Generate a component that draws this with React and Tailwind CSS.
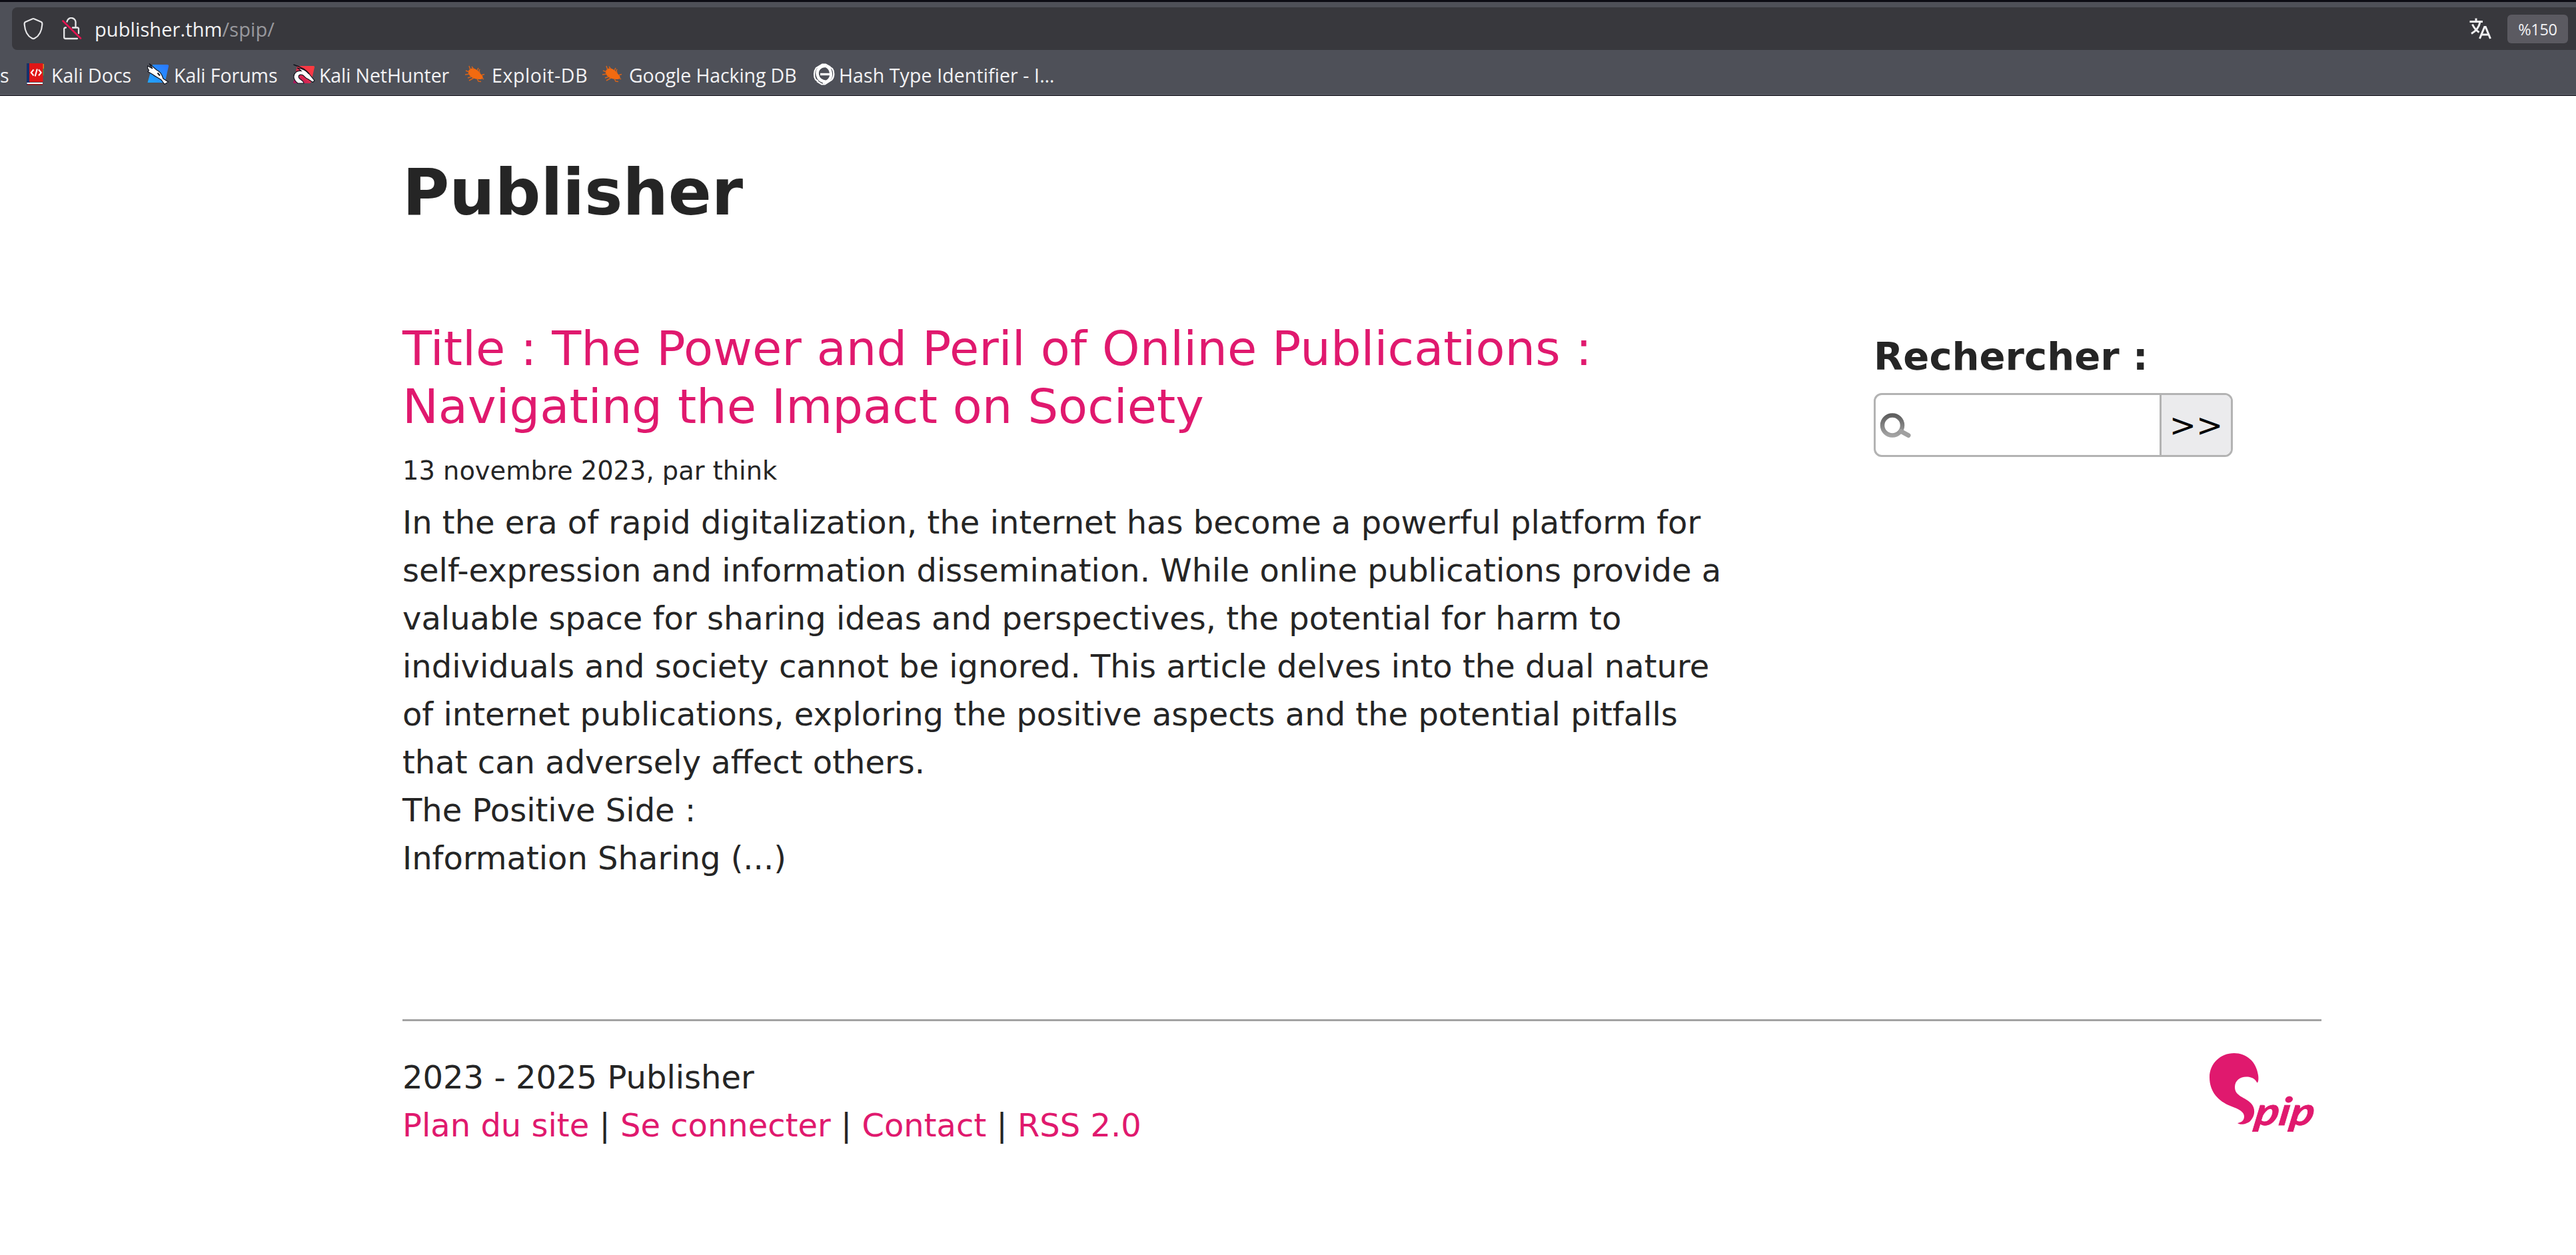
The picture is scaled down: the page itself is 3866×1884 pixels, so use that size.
const chromeFont = "font-['Open_Sans',sans-serif]";

function ShieldIcon() {
  return (
    <svg width="32" height="34" viewBox="0 0 32 34" fill="none" stroke="#e6e6e8" strokeWidth="2.2" strokeLinejoin="round">
      <path d="M16 2 Q16.500 2 17 2.300 L28 7 C29.300 7.600 29.500 9 29.300 11 C28.500 21 24 28.500 18 31.500 Q16 32.600 14 31.500 C8 28.500 3.500 21 2.700 11 C2.500 9 2.700 7.600 4 7 L15 2.300 Q15.500 2 16 2 Z" />
    </svg>
  );
}

function InsecureLockIcon() {
  return (
    <svg width="30" height="34" viewBox="0 0 30 34" fill="none" strokeLinecap="round">
      <path d="M7.500 6.500 A6.500 6.500 0 0 1 20.500 8.500 V15.500 H23.500 A1.500 1.500 0 0 1 25 17 V24 M20.500 15.500 H16 M6 15.500 H5 A1.800 1.800 0 0 0 3.200 17.300 V30 A2 2 0 0 0 5 32 H23" stroke="#e6e6e8" strokeWidth="2.300" />
      <path d="M1.500 5.500 L28 31.500" stroke="#e31451" strokeWidth="2.600" />
    </svg>
  );
}

function TranslateIcon() {
  return (
    <svg width="34" height="32" viewBox="0 0 34 32" fill="none" stroke="#f0f0f2" strokeWidth="3">
      <path d="M0.500 5.500 H20 M10 0.500 V5.500 M16 6 C14.500 14 9 20 3 23.500 M4.500 9.500 C7 15 10 18.500 14.500 21.500" />
      <path d="M15.500 31 L22.700 13.500 H24.300 L31.500 31 M18.500 25 H28.500" />
    </svg>
  );
}

function DocsIcon() {
  return (
    <svg width="26" height="33" viewBox="0 0 26 33">
      <path d="M0 0 H5 V29 L0 33 Z" fill="#17306b" />
      <path d="M24 1 H26 V18 L24 19 Z" fill="#3f8c4f" />
      <path d="M24 1 H26 V8 H24 Z" fill="#d58a26" />
      <path d="M4 0 H24.500 V28 H4 Z" fill="#e01616" />
      <path d="M0.500 30 H24" stroke="#fff" strokeWidth="2" />
      <path d="M1 32 H24" stroke="#a31313" strokeWidth="1.500" />
      <path d="M10.500 9.500 L6.800 14 L10.500 18.500 M18 9.500 L21.700 14 L18 18.500 M15.800 8.500 L12.700 19.500" fill="none" stroke="#fff" strokeWidth="2" />
    </svg>
  );
}

function ForumsIcon() {
  return (
    <svg width="33" height="33" viewBox="0 0 33 33">
      <defs>
        <linearGradient id="forums" x1="0" y1="1" x2="1" y2="0">
          <stop offset="0" stopColor="#22a6ff" />
          <stop offset="1" stopColor="#2b76ff" />
        </linearGradient>
      </defs>
      <path d="M8 2 H30 Q32.500 2 32 4.500 L27 27 Q26.500 29 24.500 29 H0.500 Z" fill="url(#forums)" />
      <path d="M0.500 4 L8 8 L3 0.500 L14 10 C18 12 20 14 22 18 L24 23 L31.500 28 L26 31.500 L21 25 C17 22 12 20 8.500 17 L1 12.500 L2.500 10.500 L0.500 7.500 Z" fill="#fff" stroke="#10131c" strokeWidth="1.200" />
      <path d="M15.500 14.500 L19 18.500" stroke="#10131c" strokeWidth="2" />
    </svg>
  );
}

function NetHunterIcon() {
  return (
    <svg width="33" height="31" viewBox="0 0 33 31">
      <defs>
        <linearGradient id="nethunter" x1="0" y1="1" x2="1" y2="0">
          <stop offset="0" stopColor="#a5105e" />
          <stop offset="0.600" stopColor="#f5364a" />
          <stop offset="1" stopColor="#ff3b3b" />
        </linearGradient>
      </defs>
      <path d="M6 3 H30 Q32.500 3 32 5 L27 27 Q26.500 29 24.500 29 H0 Z" fill="url(#nethunter)" />
      <path d="M6 6 C13 7 20 10 24 15 L32 25 L29.500 27.500 L22 22.500 C18 21.500 17 18 14 16.500 C9 15 7.500 18 8.500 20.500 C10 24 15 24 16 29 H7 C1 25 -1 18 3 13.500 C5 11 9 10 12 10.500 C10 8.500 8 7 6 6 Z" fill="#fff" stroke="#10131c" strokeWidth="1.200" />
      <path d="M0.500 1 C10 4 19 8 24 15" fill="none" stroke="#10131c" strokeWidth="1.600" />
    </svg>
  );
}

function BugIcon() {
  return (
    <svg width="30" height="26" viewBox="0 0 30 26">
      <path d="M5 9 C6 5 11 3 15 5.500 C20 8 22 11 25 15 C28 18 27 21 23 21 C17 21 11 20 7.500 16 C5 14 4.500 11 5 9 Z" fill="#f26a10" />
      <path d="M8 7 L6 1 M13 6 L10 2 M18 8 L20 4 M22 12 L21 8 L22 6 M24 15 L29 13.500 M25 19 L28 21 M6 10 L1 8 M7 13 L0 14 M10 17 L4 19 M13 19 L6 23 M18 20 L20 24 L24 24.500" fill="none" stroke="#d9641a" strokeWidth="1.500" />
    </svg>
  );
}

function HashIcon() {
  return (
    <svg width="33" height="33" viewBox="0 0 33 33" fill="none" stroke="#fff">
      <path d="M26 5.500 L19 1.500 H14 L5 7 C1.500 12 1 20 4 24.500 L8 27" strokeWidth="2.200" />
      <path d="M6 27 L13 31.500 H18 L28 25 C32.500 20 32 12 29 8 L25 5.500" strokeWidth="2.200" />
      <path d="M20 4 C11 3 5 10 7 18 C8 23 12 27 20 28" strokeWidth="4.500" />
      <path d="M15 29 C23 28 28 22 27 15 C26.500 11 25 7 20 4.500" strokeWidth="4" />
      <path d="M11 16.500 H27" strokeWidth="3.400" />
    </svg>
  );
}

function SearchIcon() {
  return (
    <svg width="48" height="38" viewBox="0 0 48 38" fill="none">
      <defs>
        <linearGradient id="lens" x1="0" y1="0" x2="0" y2="1">
          <stop offset="0" stopColor="#5f5f5f" />
          <stop offset="1" stopColor="#a3a3a3" />
        </linearGradient>
      </defs>
      <circle cx="19" cy="18.500" r="15" stroke="url(#lens)" strokeWidth="6.500" />
      <path d="M32 27.500 L43 33.500" stroke="#a0a0a0" strokeWidth="7" strokeLinecap="round" />
    </svg>
  );
}

function SpipLogo() {
  return (
    <svg className="overflow-visible" width="158" height="122" viewBox="0 0 158 122" fill="#e0196e">
      <path d="M71.500 44.500 C74 43 73.500 36 73 33 C70 12 55 0 37 0 C16 0 0 16 0 36 C0 58 13 72 32 79.500 C44 84 52 88 52 95 C52 101 48 104 42 105 C46 108.500 57 106.500 61.500 101.500 C69 93.500 69 82 62 75 C54 66 38 65 38 51 C38 41 46 35.500 55 35.500 C63 35.500 68 38 71.500 44.500 Z" />
      <g transform="translate(66 107.500) skewX(-9)">
        <text x="0" y="0" fontFamily="Lato, sans-serif" fontSize="58" fontWeight="700" fontStyle="italic" textLength="89" lengthAdjust="spacingAndGlyphs" stroke="#e0196e" strokeWidth="0.8">
          pip
        </text>
      </g>
    </svg>
  );
}

const bookmarks = [
  { label: "Kali Docs", icon: <DocsIcon />, box: "ml-[28px] w-[37px]", width: "w-[144px] tracking-[0px]" },
  { label: "Kali Forums", icon: <ForumsIcon />, box: "w-[40px]", width: "w-[179px] tracking-[-0.05px]" },
  { label: "Kali NetHunter", icon: <NetHunterIcon />, box: "w-[39px]", width: "w-[219px] tracking-[-0.1px]" },
  { label: "Exploit-DB", icon: <BugIcon />, box: "w-[40px]", width: "w-[166px] tracking-[0.6px]" },
  { label: "Google Hacking DB", icon: <BugIcon />, box: "w-[40px]", width: "w-[276px] tracking-[-0.1px]" },
  { label: "Hash Type Identifier - I…", icon: <HashIcon />, box: "w-[39px]", width: "w-[340px] tracking-[0.1px]" },
];

function BrowserChrome() {
  return (
    <header className={`h-[144px] border-t-[3px] border-b border-t-[#0c0c14] border-b-[#0c0c14] bg-[#4e5058] pt-2 text-[#f2f2f4] ${chromeFont}`}>
      <div className="ml-[18px] flex h-16 items-center rounded-l-lg bg-[#38383d] pr-3">
        <div className="ml-4 w-[59px]"><ShieldIcon /></div>
        <div className="w-[49px]"><InsecureLockIcon /></div>
        <div className="pt-px text-[29px] leading-[40px] tracking-[0.1px] whitespace-nowrap">
          publisher.thm<span className="text-[#98989d]">/spip/</span>
        </div>
        <div className="mr-[23px] ml-auto"><TranslateIcon /></div>
        <div className="flex h-[43px] w-[91px] items-center justify-center rounded-md bg-[#5b5a61] pt-px text-[23.500px] tracking-[-0.3px]">%150</div>
      </div>
      <nav className="flex h-[67px] items-center border-b border-[#5b5c66] pt-1.5 text-[28.500px] whitespace-nowrap">
        <span className="w-3 pt-1">s</span>
        {bookmarks.map((b) => (
          <div key={b.label} className="flex items-center">
            <div className={b.box}>{b.icon}</div>
            <span className={`pt-1 ${b.width}`}>{b.label}</span>
          </div>
        ))}
      </nav>
    </header>
  );
}

function Article() {
  return (
    <article className="w-[2016px] pt-[133px]">
      <h2 className="text-[72px] leading-[87px] text-[#e0196e]">
        Title : The Power and Peril of Online Publications :<br />
        Navigating the Impact on Society
      </h2>
      <p className="mt-[17px] mb-[5px] text-[38.400px] leading-[72px]">13 novembre 2023, par think</p>
      <p>
        In the era of rapid digitalization, the internet has become a powerful platform for<br />
        self-expression and information dissemination. While online publications provide a<br />
        valuable space for sharing ideas and perspectives, the potential for harm to<br />
        individuals and society cannot be ignored. This article delves into the dual nature<br />
        of internet publications, exploring the positive aspects and the potential pitfalls<br />
        that can adversely affect others.<br />
        The Positive Side :<br />
        Information Sharing (...)
      </p>
    </article>
  );
}

function Search() {
  return (
    <aside className="mr-[133px] w-[539px] pt-[154px]">
      <h3 className="text-[57.600px] leading-[69px] font-bold whitespace-nowrap">Rechercher :</h3>
      <div className="mt-[20px] flex h-[96px] overflow-hidden rounded-xl border-[3px] border-[#b3b3b3]">
        <div className="flex flex-1 items-center pt-0.5 pl-[6px]"><SearchIcon /></div>
        <button className="w-[107px] border-l-[3px] border-[#b3b3b3] bg-[#ebebed] text-center text-[48px] text-black">&gt;&gt;</button>
      </div>
    </aside>
  );
}

export default function App() {
  return (
    <div className="h-[1884px] w-[3866px] overflow-hidden bg-white font-['DejaVu_Sans',sans-serif] text-[48px] leading-[72px] text-[#252525]">
      <BrowserChrome />
      <div className="ml-[604px] w-[2880px] pt-[88px]">
        <h1 className="text-[96px] leading-[115px] font-bold">Publisher</h1>
        <main className="flex h-[1183px] justify-between">
          <Article />
          <Search />
        </main>
        <footer className="flex justify-between border-t-[3px] border-[#a3a3a3] pt-[48px]">
          <div className="whitespace-nowrap">
            <p>2023 - 2025 Publisher</p>
            <p>
              <a className="text-[#e0196e]">Plan du site</a> | <a className="text-[#e0196e]">Se connecter</a> |{" "}
              <a className="text-[#e0196e]">Contact</a> | <a className="text-[#e0196e]">RSS 2.0</a>
            </p>
          </div>
          <div className="mr-[10px]"><SpipLogo /></div>
        </footer>
      </div>
    </div>
  );
}
